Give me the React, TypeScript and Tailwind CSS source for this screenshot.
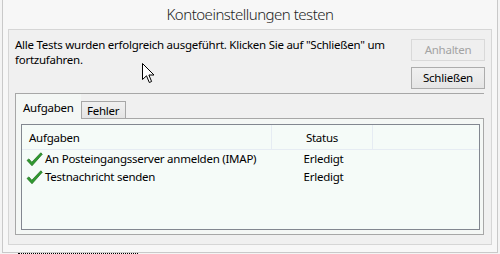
import React from 'react'

// Dialog "Kontoeinstellungen testen" — Outlook-style account test window

interface TaskRow {
  name: string
  status: string
}

const rows: TaskRow[] = [
  { name: 'An Posteingangsserver anmelden (IMAP)', status: 'Erledigt' },
  { name: 'Testnachricht senden', status: 'Erledigt' },
]

function CheckMark() {
  return (
    <svg width="17" height="15" viewBox="0 0 17 15" className="shrink-0">
      <path
        d="M1 8.4 L2.9 6.9 L5.8 10.2 L14.8 0.8 L16.3 2.2 L6 13.8 Z"
        fill="#2f9a2f"
        stroke="#1d6b1d"
        strokeWidth="0.7"
        strokeLinejoin="round"
      />
    </svg>
  )
}

function Cursor() {
  return (
    <svg width="13" height="21" viewBox="0 0 13 21" className="absolute left-[142px] top-[63px]">
      <path
        d="M0.5 0.5 L0.5 16.5 L4.5 12.8 L7.3 19.5 L9.6 18.5 L6.9 12 L12 12 Z"
        fill="#ffffff"
        stroke="#000000"
        strokeWidth="1"
        strokeLinejoin="miter"
      />
    </svg>
  )
}

export default function App() {
  return (
    <div
      className="relative h-[254px] w-[500px] overflow-hidden bg-[#f4f4f4] text-[11.5px] tracking-[-0.25px] text-black"
      style={{ fontFamily: '"Noto Sans", "Open Sans", sans-serif' }}
    >
      <div className="ml-[2px] flex h-[253px] w-[496px] flex-col border-x border-b border-[#c9c9c9] bg-[#f7f7f7] px-[5px]">
        <div className="flex h-[29px] items-center justify-center text-[15px] font-light tracking-[-0.5px] text-[#1e1e1e]">
          Kontoeinstellungen testen
        </div>

        <div className="flex h-[216px] flex-col border border-[#d6d6d6] bg-[#f0f0f0]">
          {/* message + buttons */}
          <div className="flex h-[63px] justify-between pl-[6px] pr-[6px]">
            <p className="w-[392px] pt-[7px] leading-[15px]">
              Alle Tests wurden erfolgreich ausgeführt. Klicken Sie auf "Schließen" um fortzufahren.
            </p>
            <div className="flex flex-col gap-[6px] pt-[9px]">
              <button
                type="button"
                disabled
                className="h-[22px] w-[74px] border border-[#d9d9d9] bg-[#efefef] text-[11.5px] text-[#a3a3a3]"
              >
                Anhalten
              </button>
              <button
                type="button"
                className="h-[22px] w-[74px] border border-[#acacac] bg-gradient-to-b from-[#f0f0f0] to-[#e5e5e5] text-[11.5px] text-black"
              >
                Schließen
              </button>
            </div>
          </div>

          {/* tab control */}
          <div className="ml-[6px] flex w-[469px] flex-col border-t border-[#a7a7a7]">
            <div className="flex h-[25px] items-end">
              <div className="flex h-full w-[66px] items-center border-l border-[#a7a7a7] bg-[#f4f7f5] pl-[7px] pt-[2px]">
                Aufgaben
              </div>
              <div className="flex h-[18px] w-[45px] items-center border border-[#a7a7a7] bg-gradient-to-b from-[#f0f0f0] to-[#e4e4e4] pl-[5px] pt-[1px]">
                Fehler
              </div>
              <div className="flex-1 border-b border-[#a7a7a7]" />
            </div>

            <div className="flex h-[116px] flex-col border-x border-b border-[#a7a7a7] bg-[#f4f7f5] pb-[4px] pl-[5px] pr-[3px] pt-[5px]">
              <div className="flex flex-1 flex-col border border-[#828790] bg-[#f5fbf8]">
                <div className="flex h-[25px] border-b border-[#e6ecf3]">
                  <div className="flex w-[250px] items-center border-r border-[#e6ecf3] pl-[7px] pt-[2px]">
                    Aufgaben
                  </div>
                  <div className="flex w-[101px] items-center justify-center border-r border-[#e6ecf3] pt-[2px]">
                    Status
                  </div>
                  <div className="flex-1" />
                </div>
                {rows.map((row) => (
                  <div key={row.name} className="flex h-[18px] items-center">
                    <div className="flex w-[251px] items-center pl-[4px]">
                      <CheckMark />
                      <span className="ml-[2px] whitespace-nowrap">{row.name}</span>
                    </div>
                    <div className="w-[101px] text-center">{row.status}</div>
                  </div>
                ))}
              </div>
            </div>
          </div>
        </div>
      </div>
      <div className="ml-[18px] h-[1px] w-[120px] border-b border-dotted border-black" />
      <Cursor />
    </div>
  )
}
